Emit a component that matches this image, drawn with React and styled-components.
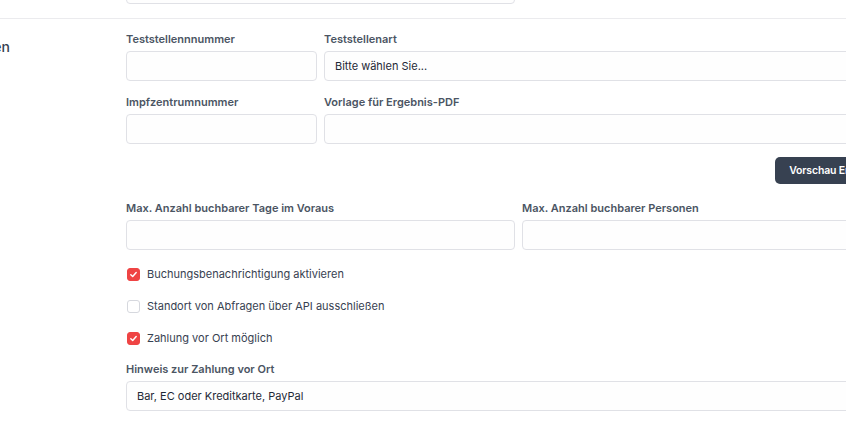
import React from "react";
import styled, { createGlobalStyle } from "styled-components";

const Global = createGlobalStyle`
  html, body { margin: 0; padding: 0; overflow: hidden; background: #ffffff; }
  body { font-family: Inter, "Noto Sans", "Liberation Sans", sans-serif; color: #1f2937; }
  * { box-sizing: border-box; }
`;

const Page = styled.div`
  margin-top: -26px;
  margin-left: -80px;
  width: 1100px;
`;

const Section = styled.section`
  display: grid;
  grid-template-columns: 206px 785px;
  padding: ${(p) => (p.$first ? "0 0 14px" : "12px 0 20px")};
  border-bottom: ${(p) => (p.$first ? "1px solid #ebebee" : "none")};
`;

const SectionTitle = styled.div`
  font-size: 14px;
  line-height: 16px;
  font-weight: 500;
  color: #374151;
  padding-top: 8px;
`;

const Fields = styled.div`
  display: grid;
  grid-template-columns: repeat(4, 191px);
  column-gap: 7px;
  align-content: start;
`;

const Field = styled.div`
  grid-column: span ${(p) => p.$span || 1};
  display: flex;
  flex-direction: column;
  margin-top: ${(p) => p.$mt || 0}px;
`;

const Label = styled.label`
  font-size: 11px;
  line-height: 16px;
  font-weight: 600;
  color: #4b5563;
  margin-bottom: 4px;
  white-space: nowrap;
`;

const Input = styled.div`
  height: 30px;
  border: 1px solid #e0e1e6;
  border-radius: 4px;
  background: #fefefe;
  padding: 0 10px;
  display: flex;
  align-items: center;
  font-size: 11px;
  color: #1f2937;
  white-space: nowrap;
`;

const ButtonRow = styled.div`
  grid-column: span 4;
  display: flex;
  justify-content: flex-end;
  margin-top: 13px;
  margin-right: -10px;
`;

const Button = styled.button`
  height: 27px;
  padding: 0 14px;
  border: none;
  border-radius: 5px;
  background: #374151;
  color: #ffffff;
  font-family: inherit;
  font-size: 10.5px;
  font-weight: 600;
  letter-spacing: -0.15px;
  white-space: nowrap;
`;

const CheckRow = styled.div`
  grid-column: span 4;
  display: flex;
  align-items: center;
  gap: 7px;
  height: 16px;
  margin-top: ${(p) => p.$mt}px;
  padding-left: 1px;
`;

const Box = styled.span`
  width: 13px;
  height: 13px;
  border-radius: 3px;
  flex: none;
  display: flex;
  align-items: center;
  justify-content: center;
  background: ${(p) => (p.$checked ? "#ef4444" : "#ffffff")};
  border: 1px solid ${(p) => (p.$checked ? "#ef4444" : "#d6d8de")};
`;

const CheckText = styled.span`
  font-size: 11px;
  line-height: 16px;
  color: #374151;
  white-space: nowrap;
`;

function Check({ checked, label, mt }) {
  return (
    <CheckRow $mt={mt}>
      <Box $checked={checked}>
        {checked && (
          <svg width="9" height="9" viewBox="0 0 10 10">
            <path d="M2 5.3 L4.1 7.3 L8 2.8" fill="none" stroke="#fff" strokeWidth="1.6" strokeLinecap="round" strokeLinejoin="round" />
          </svg>
        )}
      </Box>
      <CheckText>{label}</CheckText>
    </CheckRow>
  );
}

export default function App() {
  return (
    <>
      <Global />
      <Page>
        <Section $first>
          <div />
          <Fields>
            <Field $span={2}>
              <Input />
            </Field>
          </Fields>
        </Section>
        <Section>
          <SectionTitle>Einstellungen</SectionTitle>
          <Fields>
            <Field>
              <Label>Teststellennnummer</Label>
              <Input />
            </Field>
            <Field $span={3}>
              <Label>Teststellenart</Label>
              <Input>Bitte wählen Sie...</Input>
            </Field>
            <Field $mt={13}>
              <Label>Impfzentrumnummer</Label>
              <Input />
            </Field>
            <Field $span={3} $mt={13}>
              <Label>Vorlage für Ergebnis-PDF</Label>
              <Input />
            </Field>
            <ButtonRow>
              <Button>Vorschau Ergebnis-PDF</Button>
            </ButtonRow>
            <Field $span={2} $mt={16}>
              <Label>Max. Anzahl buchbarer Tage im Voraus</Label>
              <Input />
            </Field>
            <Field $span={2} $mt={16}>
              <Label>Max. Anzahl buchbarer Personen</Label>
              <Input />
            </Field>
            <Check checked mt={16} label="Buchungsbenachrichtigung aktivieren" />
            <Check mt={16} label="Standort von Abfragen über API ausschließen" />
            <Check checked mt={16} label="Zahlung vor Ort möglich" />
            <Field $span={4} $mt={15}>
              <Label>Hinweis zur Zahlung vor Ort</Label>
              <Input>Bar, EC oder Kreditkarte, PayPal</Input>
            </Field>
          </Fields>
        </Section>
      </Page>
    </>
  );
}
